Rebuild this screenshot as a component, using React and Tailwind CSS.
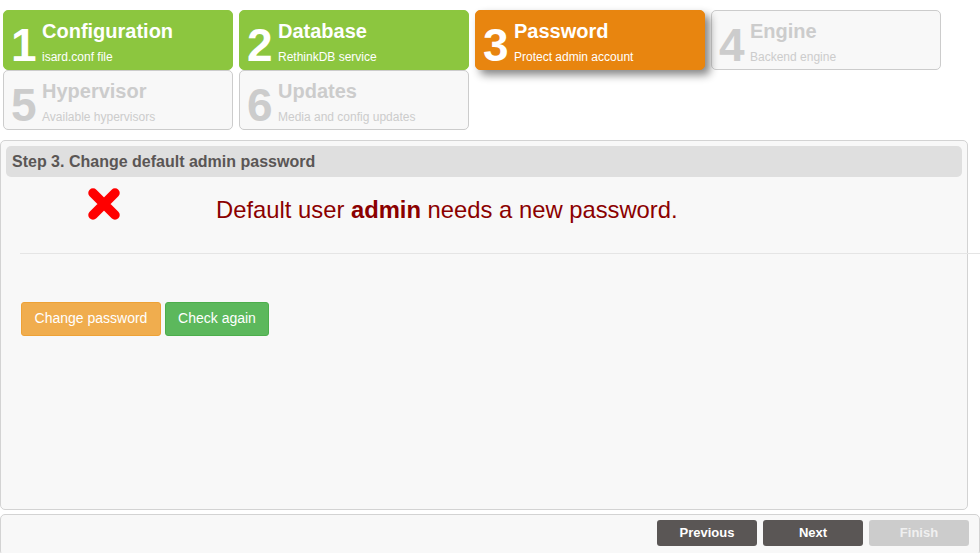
import React from "react";

const steps = [
  { n: "1", t: "Configuration", s: "isard.conf file", kind: "done" },
  { n: "2", t: "Database", s: "RethinkDB service", kind: "done" },
  { n: "3", t: "Password", s: "Protect admin account", kind: "active" },
  { n: "4", t: "Engine", s: "Backend engine", kind: "off" },
  { n: "5", t: "Hypervisor", s: "Available hypervisors", kind: "off" },
  { n: "6", t: "Updates", s: "Media and config updates", kind: "off" },
];

function Step({ n, t, s, kind }) {
  const cls =
    kind === "done"
      ? "bg-[#8cc63f] text-white border border-[#8cc63f]"
      : kind === "active"
      ? "bg-[#e8850f] text-white border border-[#e8850f] shadow-[5px_5px_8px_#888] relative z-10"
      : "bg-[#f8f8f8] text-[#cccccc] border border-[#cccccc]";
  return (
    <div className={`w-[230px] h-[60px] rounded-[5px] flex items-start pl-[7px] ${cls}`}>
      <div className="text-[46px] font-bold leading-none w-[30px] mt-[11px] tracking-[-1px]">{n}</div>
      <div className="flex flex-col pl-[1px]">
        <div className="text-[20px] font-bold leading-none mt-[10px]">{t}</div>
        <div className="text-[12px] leading-none mt-[10px]">{s}</div>
      </div>
    </div>
  );
}

export default function App() {
  return (
    <div className="w-[980px] h-[553px] overflow-hidden bg-white font-['Liberation_Sans',Arial,sans-serif]">
      <div className="flex flex-wrap gap-x-[6px] pl-[3px] pt-[10px]">
        {steps.map((st) => (
          <Step key={st.n} {...st} />
        ))}
      </div>
      <div className="mt-[10px] w-[968px] h-[370px] border border-[#d3d3d3] rounded-[5px] bg-[#f8f8f8] p-[5px]">
        <div className="h-[31px] rounded-[5px] bg-[#dfdfdf] flex items-center pl-[6px] text-[16px] font-bold text-[#5a5655]">
          Step 3. Change default admin password
        </div>
        <div className="flex items-start">
          <div className="ml-[82px] mt-[11px] w-[32px] h-[32px]">
            <svg width="32" height="32" viewBox="0 0 32 32">
              <path d="M5 5 L27 27 M27 5 L5 27" stroke="#ff0000" strokeWidth="9.5" strokeLinecap="round" />
            </svg>
          </div>
          <div className="ml-[96px] mt-[21px] text-[23.8px] leading-none text-[#8b0000]">
            Default user <b>admin</b> needs a new password.
          </div>
        </div>
        <div className="ml-[14px] mt-[31px] w-[960px] border-t border-[#e5e5e5]"></div>
        <div className="flex gap-[4px] ml-[15px] mt-[48px]">
          <button className="h-[34px] w-[140px] rounded-[3px] bg-[#f0ad4e] border border-[#eea236] text-white text-[14px]">
            Change password
          </button>
          <button className="h-[34px] w-[104px] rounded-[3px] bg-[#5cb85c] border border-[#4cae4c] text-white text-[14px]">
            Check again
          </button>
        </div>
      </div>
      <div className="mt-[4px] w-[980px] h-[42px] border border-[#d3d3d3] rounded-[5px] bg-[#f8f8f8] flex justify-end items-start pt-[5px] pr-[10px] gap-[6px]">
        <button className="w-[100px] h-[26px] rounded-[3px] bg-[#5a5655] text-white text-[13px] font-bold">Previous</button>
        <button className="w-[100px] h-[26px] rounded-[3px] bg-[#5a5655] text-white text-[13px] font-bold">Next</button>
        <button className="w-[100px] h-[26px] rounded-[3px] bg-[#cccccc] text-[#f0f0f0] text-[13px] font-bold">Finish</button>
      </div>
    </div>
  );
}
